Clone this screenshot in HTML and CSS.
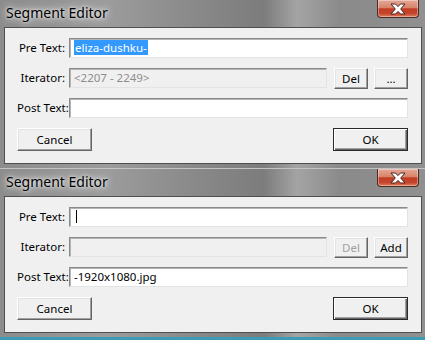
FILE: index.html
```html
<!DOCTYPE html>
<html lang="en">
<head>
    <meta charset="UTF-8">
    <title>Segment Editor</title>
    <link rel="stylesheet" href="styles.css">
</head>
<body>
    <!-- Editeur avec iterateur -->
    <div class="window first">
        <div class="titlebar">
            <span class="title">Segment Editor</span>
            <div class="close">
                <svg width="18" height="12" viewBox="0 0 18 12"><path d="M2 1h4.5L9 3.6 11.5 1H16l-4.3 5L16 11h-4.5L9 8.4 6.5 11H2l4.3-5z" fill="#fff" stroke="#4a2420" stroke-width="1" stroke-linejoin="round"/></svg>
            </div>
        </div>
        <div class="client">
            <div class="row">
                <label>Pre Text:</label>
                <div class="field"><span class="selected">eliza-dushku-</span></div>
            </div>
            <div class="row">
                <label>Iterator:</label>
                <div class="field disabled">&lt;2207 - 2249&gt;</div>
                <button class="btn small">Del</button>
                <button class="btn small">...</button>
            </div>
            <div class="row">
                <label>Post Text:</label>
                <div class="field"></div>
            </div>
            <div class="actions">
                <button class="btn wide">Cancel</button>
                <button class="btn wide default">OK</button>
            </div>
        </div>
    </div>

    <!-- Editeur sans iterateur -->
    <div class="window">
        <div class="titlebar">
            <span class="title">Segment Editor</span>
            <div class="close">
                <svg width="18" height="12" viewBox="0 0 18 12"><path d="M2 1h4.5L9 3.6 11.5 1H16l-4.3 5L16 11h-4.5L9 8.4 6.5 11H2l4.3-5z" fill="#fff" stroke="#4a2420" stroke-width="1" stroke-linejoin="round"/></svg>
            </div>
        </div>
        <div class="client">
            <div class="row">
                <label>Pre Text:</label>
                <div class="field"><span class="caret"></span></div>
            </div>
            <div class="row">
                <label>Iterator:</label>
                <div class="field disabled"></div>
                <button class="btn small" disabled>Del</button>
                <button class="btn small">Add</button>
            </div>
            <div class="row">
                <label>Post Text:</label>
                <div class="field">-1920x1080.jpg</div>
            </div>
            <div class="actions">
                <button class="btn wide">Cancel</button>
                <button class="btn wide default">OK</button>
            </div>
        </div>
    </div>
</body>
</html>
```

FILE: styles.css
```css
/* Page */
body {
    margin: 0;
    width: 425px;
    height: 340px;
    overflow: hidden;
    background: #3b9cb4;
    font-family: "Noto Sans", "Open Sans", sans-serif;
    font-size: 11.5px;
    color: #000;
}

/* Fenetre */
.window {
    height: 169px;
    background: linear-gradient(to right, #8c8c8c, #9c9c9c 25%, #8a8a8a 45%, #7c7c7c 62%, #a4a4a4 70%, #8a8a8a 80%, #909090);
    border-top: 1px solid #c4c4c4;
    box-sizing: border-box;
}
.first {
    margin-top: -1px;
}
.titlebar {
    height: 27px;
    display: flex;
    justify-content: space-between;
    align-items: flex-start;
}
.title {
    padding-left: 6px;
    line-height: 26px;
    font-size: 14px;
    text-shadow: 0 0 6px #e8e8e8, 0 0 10px #ddd, 0 0 3px #eee;
}
.close {
    width: 40px;
    height: 17px;
    margin-right: 6px;
    border: 1px solid #4b2b26;
    border-top: none;
    border-radius: 0 0 4px 4px;
    background: linear-gradient(#e4a898, #d88468 45%, #c03c22 52%, #c4462c 80%, #e0805e);
    box-shadow: inset 0 0 0 1px rgba(255, 255, 255, .35);
    display: flex;
    align-items: center;
    justify-content: center;
}

/* Zone client */
.client {
    margin: 0 3px 0 4px;
    height: 137px;
    box-sizing: border-box;
    background: #f0f0f0;
    border: 1px solid #4f4f4f;
    padding: 10px 13px 0 12px;
}
.row {
    display: flex;
    height: 20px;
    margin-bottom: 10px;
    align-items: flex-start;
}
.row label {
    width: 48px;
    margin-right: 4px;
    text-align: right;
    line-height: 20px;
    white-space: nowrap;
}
.field {
    flex: 1;
    height: 20px;
    box-sizing: border-box;
    background: #fff;
    border-style: solid;
    border-width: 1px;
    border-color: #8a8a8a #e3e3e3 #e3e3e3 #8a8a8a;
    box-shadow: inset 1px 1px 0 #b4b4b4;
    padding-left: 4px;
    line-height: 17px;
    white-space: nowrap;
}
.field.disabled {
    background: #f0f0f0;
    color: #8d8d8d;
}
.selected {
    background: #3399ff;
    color: #fff;
    padding: 0 1px;
}
.caret {
    display: inline-block;
    width: 1px;
    height: 13px;
    margin-left: 2px;
    margin-top: 2px;
    background: #000;
    vertical-align: top;
}

/* Boutons */
.btn {
    font: inherit;
    color: #000;
    background: #f0f0f0;
    border-style: solid;
    border-width: 1px;
    border-color: #fff #646464 #646464 #fff;
    box-shadow: inset -1px -1px 0 #a0a0a0, inset 1px 1px 0 #e3e3e3;
    padding: 0;
    box-sizing: border-box;
}
.btn:disabled {
    color: #a0a0a0;
}
.small {
    width: 34px;
    height: 21px;
    margin-left: 6px;
}
.row .small:first-of-type {
    margin-left: 7px;
}
.actions {
    display: flex;
    justify-content: space-between;
}
.wide {
    width: 75px;
    height: 23px;
}
.default {
    border: 1px solid #2a2a2a;
    box-shadow: inset 1px 1px 0 #fff, inset -1px -1px 0 #646464, inset -2px -2px 0 #a0a0a0;
}
```
